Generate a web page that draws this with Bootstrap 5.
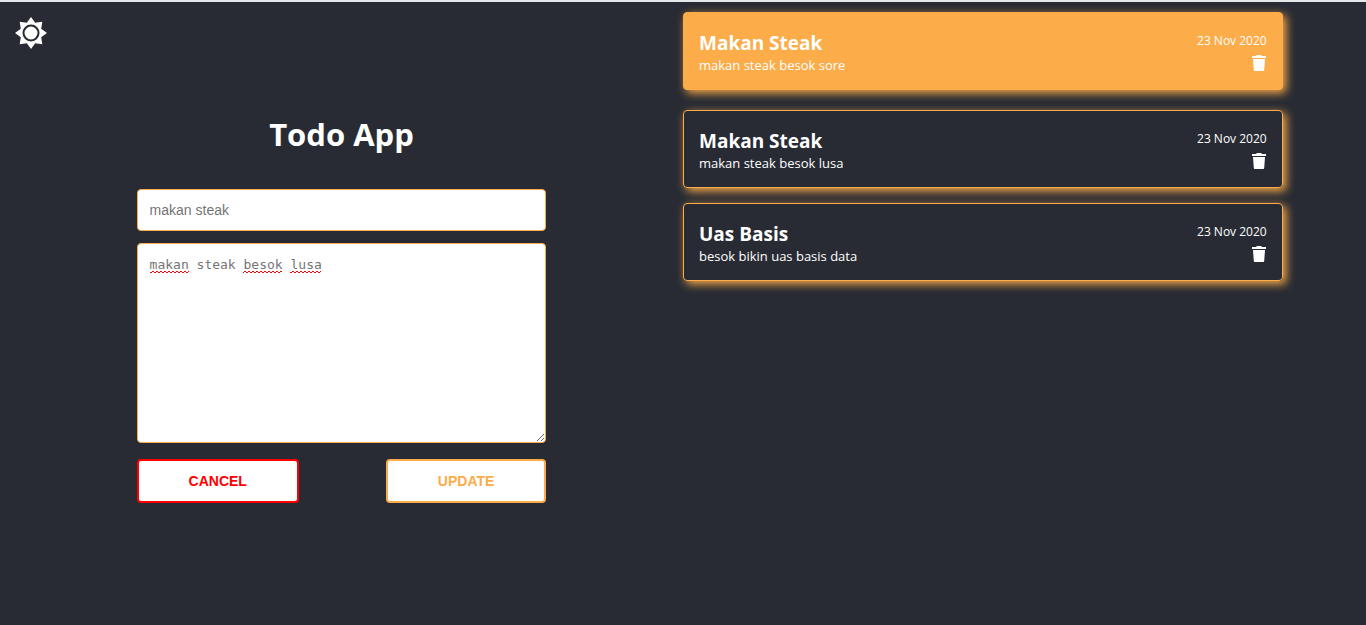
<!DOCTYPE html>
<html lang="id">
<head>
<meta charset="utf-8">
<meta name="viewport" content="width=device-width, initial-scale=1">
<title>Todo App</title>
<link href="https://cdn.jsdelivr.net/npm/bootstrap@5.3.0/dist/css/bootstrap.min.css" rel="stylesheet">
<style>
  :root { --ink: #282b34; --accent: #fcac48; }
  body { background: var(--ink); color: #fff; font-family: "Open Sans", "Noto Sans", sans-serif; border-top: 2px solid #e4e8ea; }
  .theme-toggle { position: absolute; top: 16px; left: 14px; line-height: 0; }
  .form-pane { width: 60%; padding-top: 110px; }
  .app-title { font-size: 31px; line-height: 44px; font-weight: 700; margin-bottom: 33px; }
  .field, .field:focus { border: 1px solid var(--accent); border-radius: 4px; background: #fff; color: #757575; padding: 10px 12px; box-shadow: none; }
  .field-title { font: 14px/20px "Liberation Sans", Arial, sans-serif; height: 42px; }
  .field-note, .field-note:focus { font: 13px/20px "DejaVu Sans Mono", monospace; padding: 11px 12px; }
  textarea.field-note { height: 200px; resize: vertical; }
  .field::placeholder { color: #757575; opacity: 1; }
  .spell-marks { position: absolute; left: 13px; top: 27px; pointer-events: none; }
  .btn-todo { height: 44px; border: 2px solid currentColor; border-radius: 4px; padding: 0 50px; font: 700 14px/20px "Liberation Sans", Arial, sans-serif; background: #fff; }
  .btn-todo:hover { background: #fff; border-color: currentColor; }
  .btn-cancel, .btn-cancel:hover { color: #f00; }
  .btn-update, .btn-update:hover { color: var(--accent); }
  .todo-list { width: 87.8%; padding-top: 10px; }
  .todo-item { border: 1px solid var(--accent); border-radius: 4px; padding: 17px 15px 14px; min-height: 78px; margin-bottom: 15px; box-shadow: 3px 3px 10px var(--accent); }
  .todo-item.active { background: var(--accent); margin-bottom: 20px; }
  .todo-name { font-size: 19px; line-height: 26px; font-weight: 700; margin: 0; }
  .todo-text { font-size: 13px; line-height: 19px; margin: 0; }
  .todo-date { font-size: 12px; line-height: 22px; }
  .trash { line-height: 0; margin-right: 1px; margin-top: 3px; }
</style>
</head>
<body>
<button type="button" class="theme-toggle btn p-0 border-0 text-white" aria-label="Toggle theme">
  <svg width="34" height="34" viewBox="-17 -17 34 34">
    <path fill="#fff" d="M0-16 4.200-10.200 11.300-11.300 10.200-4.200 16 0 10.200 4.200 11.300 11.300 4.200 10.200 0 16-4.200 10.200-11.300 11.300-10.200 4.200-16 0-10.200-4.200-11.300-11.300-4.200-10.200Z"/>
    <circle r="7.5" fill="#fff" stroke="#282b34" stroke-width="2"/>
  </svg>
</button>
<div class="container-fluid p-0">
  <div class="row g-0">
    <section class="col-6">
      <form class="form-pane mx-auto">
        <h1 class="app-title text-center">Todo App</h1>
        <input type="text" class="form-control field field-title" placeholder="makan steak" aria-label="Title">
        <div class="position-relative mt-2 pt-1 mb-3">
          <div class="position-relative">
            <textarea class="form-control field field-note d-block" placeholder="makan steak besok lusa" aria-label="Description" spellcheck="false"></textarea>
            <svg class="spell-marks" width="172" height="4" aria-hidden="true">
              <defs><pattern id="wave" width="4" height="4" patternUnits="userSpaceOnUse"><path d="M-1 0 1 2 3 0 5 2" transform="translate(0 1)" fill="none" stroke="#f00"/></pattern></defs>
              <path fill="url(#wave)" d="M0 0h39v4H0zM93 0h39v4H93zM140 0h31v4h-31z"/>
            </svg>
          </div>
        </div>
        <div class="d-flex justify-content-between">
          <button type="button" class="btn btn-todo btn-cancel">CANCEL</button>
          <button type="submit" class="btn btn-todo btn-update">UPDATE</button>
        </div>
      </form>
    </section>
    <section class="col-6">
      <div class="todo-list">
        <article class="todo-item active d-flex justify-content-between">
          <div><h2 class="todo-name">Makan Steak</h2><p class="todo-text">makan steak besok sore</p></div>
          <div class="d-flex flex-column align-items-end"><time class="todo-date" datetime="2020-11-23">23 Nov 2020</time>
            <button type="button" class="trash btn p-0 border-0" aria-label="Delete"><svg width="14" height="16" viewBox="0 0 14 16" fill="#fff"><path d="M0 1h4l1-1h4l1 1h4v2H0zM1 4h12l-.8 11q-.1 1-1 1H2.800q-.9 0-1-1z"/></svg></button></div>
        </article>
        <article class="todo-item d-flex justify-content-between">
          <div><h2 class="todo-name">Makan Steak</h2><p class="todo-text">makan steak besok lusa</p></div>
          <div class="d-flex flex-column align-items-end"><time class="todo-date" datetime="2020-11-23">23 Nov 2020</time>
            <button type="button" class="trash btn p-0 border-0" aria-label="Delete"><svg width="14" height="16" viewBox="0 0 14 16" fill="#fff"><path d="M0 1h4l1-1h4l1 1h4v2H0zM1 4h12l-.8 11q-.1 1-1 1H2.800q-.9 0-1-1z"/></svg></button></div>
        </article>
        <article class="todo-item d-flex justify-content-between">
          <div><h2 class="todo-name">Uas Basis</h2><p class="todo-text">besok bikin uas basis data</p></div>
          <div class="d-flex flex-column align-items-end"><time class="todo-date" datetime="2020-11-23">23 Nov 2020</time>
            <button type="button" class="trash btn p-0 border-0" aria-label="Delete"><svg width="14" height="16" viewBox="0 0 14 16" fill="#fff"><path d="M0 1h4l1-1h4l1 1h4v2H0zM1 4h12l-.8 11q-.1 1-1 1H2.800q-.9 0-1-1z"/></svg></button></div>
        </article>
      </div>
    </section>
  </div>
</div>
<script src="https://cdn.jsdelivr.net/npm/bootstrap@5.3.0/dist/js/bootstrap.bundle.min.js"></script>
</body>
</html>
